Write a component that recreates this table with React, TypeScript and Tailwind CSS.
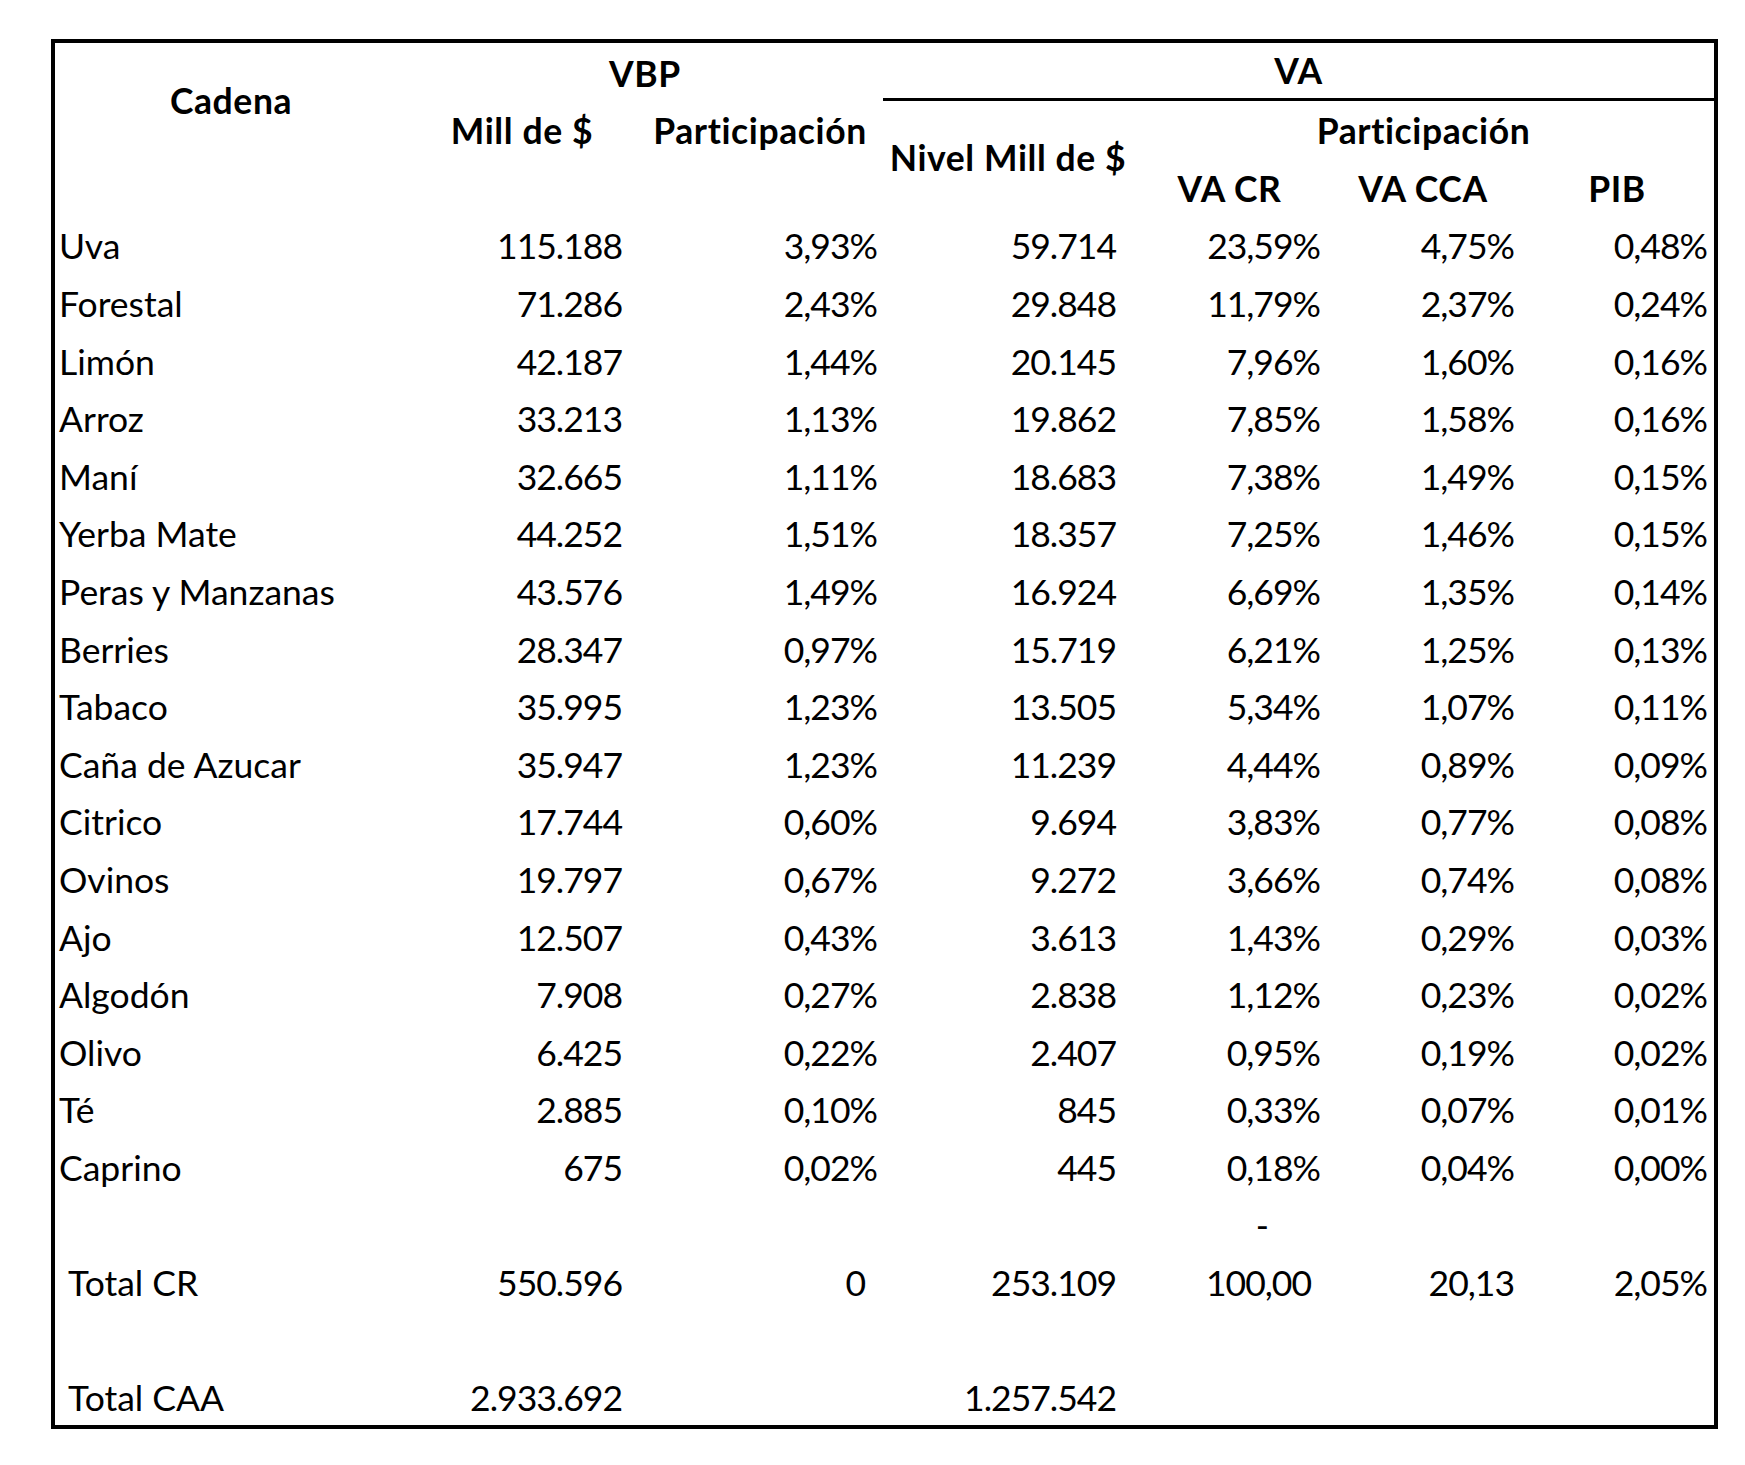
import React from 'react';

// VBP / VA por cadena — réplica de la planilla

type Row = [string, string, string, string, string, string, string];

const rows: Row[] = [
  ['Uva', '115.188', '3,93%', '59.714', '23,59%', '4,75%', '0,48%'],
  ['Forestal', '71.286', '2,43%', '29.848', '11,79%', '2,37%', '0,24%'],
  ['Limón', '42.187', '1,44%', '20.145', '7,96%', '1,60%', '0,16%'],
  ['Arroz', '33.213', '1,13%', '19.862', '7,85%', '1,58%', '0,16%'],
  ['Maní', '32.665', '1,11%', '18.683', '7,38%', '1,49%', '0,15%'],
  ['Yerba Mate', '44.252', '1,51%', '18.357', '7,25%', '1,46%', '0,15%'],
  ['Peras y Manzanas', '43.576', '1,49%', '16.924', '6,69%', '1,35%', '0,14%'],
  ['Berries', '28.347', '0,97%', '15.719', '6,21%', '1,25%', '0,13%'],
  ['Tabaco', '35.995', '1,23%', '13.505', '5,34%', '1,07%', '0,11%'],
  ['Caña de Azucar', '35.947', '1,23%', '11.239', '4,44%', '0,89%', '0,09%'],
  ['Citrico', '17.744', '0,60%', '9.694', '3,83%', '0,77%', '0,08%'],
  ['Ovinos', '19.797', '0,67%', '9.272', '3,66%', '0,74%', '0,08%'],
  ['Ajo', '12.507', '0,43%', '3.613', '1,43%', '0,29%', '0,03%'],
  ['Algodón', '7.908', '0,27%', '2.838', '1,12%', '0,23%', '0,02%'],
  ['Olivo', '6.425', '0,22%', '2.407', '0,95%', '0,19%', '0,02%'],
  ['Té', '2.885', '0,10%', '845', '0,33%', '0,07%', '0,01%'],
  ['Caprino', '675', '0,02%', '445', '0,18%', '0,04%', '0,00%'],
];

// column alignment / padding, one per column (numbers squeezed a bit, like Calibri)
const colPad = [
  'justify-start pl-[4px]',
  'justify-end pr-[15px] tracking-[-1px]',
  'justify-end pr-[6px] tracking-[-1px]',
  'justify-end pr-[17px] tracking-[-1px]',
  'justify-end pr-[6px] tracking-[-1px]',
  'justify-end pr-[6px] tracking-[-1px]',
  'justify-end pr-[7px] tracking-[-1px]',
];

function Cell({ className = '', children }: { className?: string; children?: React.ReactNode }) {
  return (
    <div className={`flex items-end pb-[10px] leading-[34px] whitespace-nowrap ${className}`}>
      {children}
    </div>
  );
}

const head = 'justify-center font-bold tracking-[0.6px]';

export default function App() {
  return (
    <div className="min-h-screen bg-white pt-[39px] pl-[51px] text-black font-['Lato',sans-serif] text-[35.5px]">
      <div className="w-[1667px] border-4 border-black">
        <div className="grid grid-cols-[352px_230px_246px_250px_193px_194px_194px] auto-rows-[57.6px]">
          {/* header row 1 */}
          <div className="row-span-2 flex items-center justify-center font-bold tracking-[0.6px] leading-[34px]">
            Cadena
          </div>
          <Cell className={`col-span-2 ${head}`}>VBP</Cell>
          <Cell className={`col-span-4 ${head} border-b-[3px] border-black pb-[7px]`}>VA</Cell>

          {/* header row 2 */}
          <Cell className={head}>Mill de $</Cell>
          <Cell className={head}>Participación</Cell>
          <div className="row-span-2 flex items-center justify-center font-bold tracking-[0.6px] leading-[34px] whitespace-nowrap">
            Nivel Mill de $
          </div>
          <Cell className={`col-span-3 ${head}`}>Participación</Cell>

          {/* header row 3 */}
          <Cell />
          <Cell />
          <Cell />
          <Cell className={head}>VA CR</Cell>
          <Cell className={head}>VA CCA</Cell>
          <Cell className={head}>PIB</Cell>

          {/* data */}
          {rows.map((r) =>
            r.map((v, i) => (
              <Cell key={r[0] + i} className={colPad[i]}>
                {v}
              </Cell>
            ))
          )}

          {/* stray dash row */}
          <Cell />
          <Cell />
          <Cell />
          <Cell />
          <Cell className="justify-end pr-[57px]">-</Cell>
          <Cell />
          <Cell />

          {/* Total CR */}
          <Cell className="justify-start pl-[13px]">Total CR</Cell>
          <Cell className={colPad[1]}>550.596</Cell>
          <Cell className="justify-end pr-[17px]">0</Cell>
          <Cell className={colPad[3]}>253.109</Cell>
          <Cell className="justify-end pr-[15px] tracking-[-1px]">100,00</Cell>
          <Cell className={colPad[5]}>20,13</Cell>
          <Cell className={colPad[6]}>2,05%</Cell>

          {/* blank */}
          <Cell />
          <Cell />
          <Cell />
          <Cell />
          <Cell />
          <Cell />
          <Cell />

          {/* Total CAA */}
          <Cell className="justify-start pl-[13px]">Total CAA</Cell>
          <Cell className={colPad[1]}>2.933.692</Cell>
          <Cell />
          <Cell className={colPad[3]}>1.257.542</Cell>
          <Cell />
          <Cell />
          <Cell />
        </div>
      </div>
    </div>
  );
}
